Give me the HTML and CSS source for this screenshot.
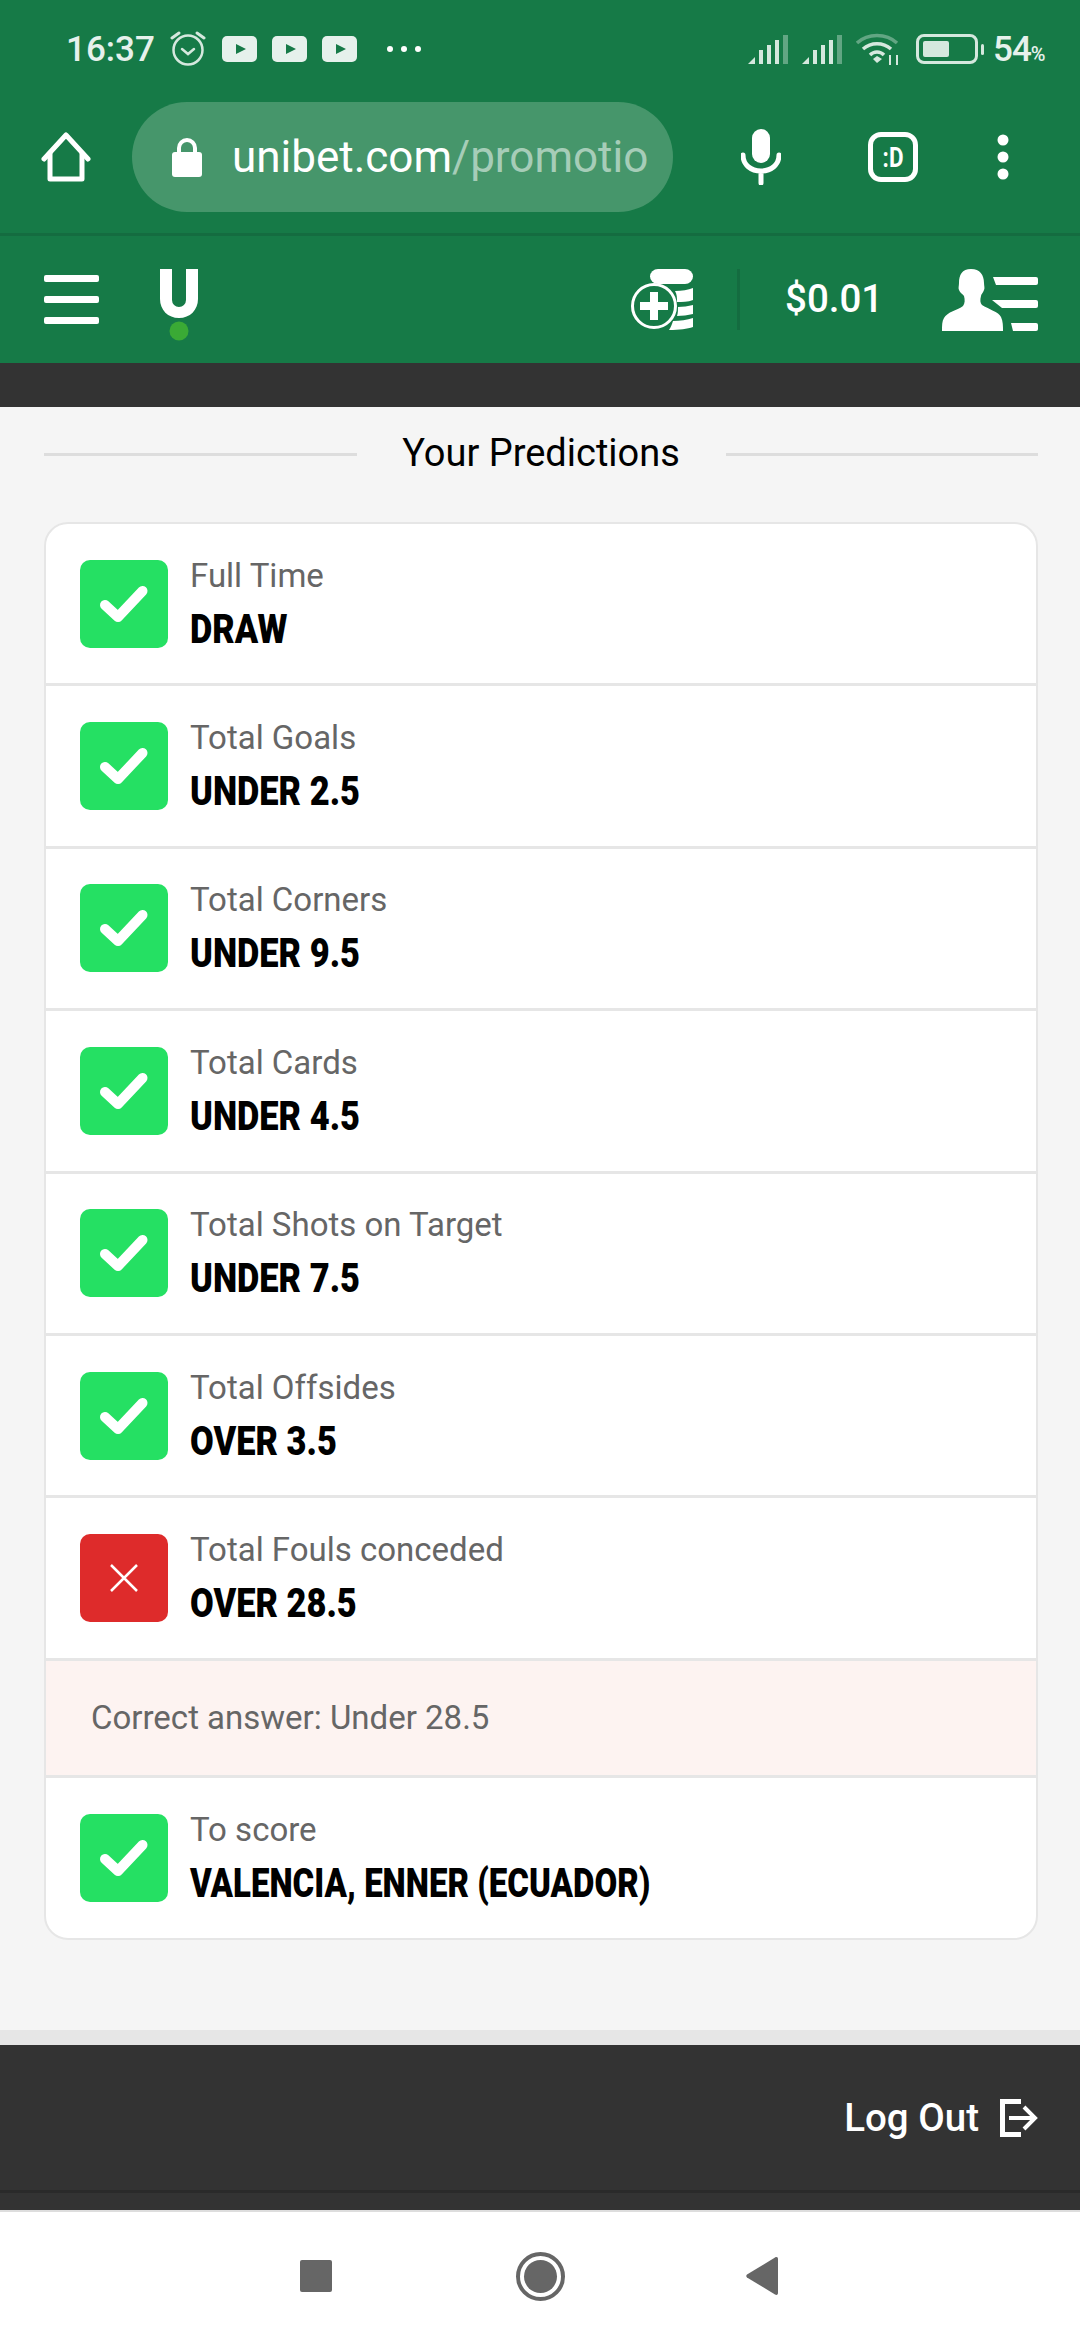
FILE: index.html
```html
<!DOCTYPE html>
<html lang="en">
<head>
<meta charset="UTF-8">
<meta name="viewport" content="width=device-width, initial-scale=1.0">
<title>Your Predictions</title>
<link rel="stylesheet" href="styles.css">
</head>
<body>

<header class="top">
    <div class="status">
        <span class="time">16:37</span>
        <svg class="alarm" width="36" height="36" viewBox="0 0 36 36" fill="none" stroke="#d5e8de" stroke-linecap="round">
            <circle cx="18" cy="19" r="14.5" stroke-width="2.5"/>
            <path d="M12 18l6 5 6-5" stroke-width="2.5"/>
            <path d="M2 7l7-5M34 7l-7-5" stroke-width="3"/>
        </svg>
        <svg class="yt" width="35" height="26" viewBox="0 0 35 26"><rect width="35" height="26" rx="5" fill="#e6f1ec"/><path d="M14 8l10 5-10 5z" fill="#167a47"/></svg>
        <svg class="yt" width="35" height="26" viewBox="0 0 35 26"><rect width="35" height="26" rx="5" fill="#e6f1ec"/><path d="M14 8l10 5-10 5z" fill="#167a47"/></svg>
        <svg class="yt" width="35" height="26" viewBox="0 0 35 26"><rect width="35" height="26" rx="5" fill="#e6f1ec"/><path d="M14 8l10 5-10 5z" fill="#167a47"/></svg>
        <svg class="more" width="34" height="8" viewBox="0 0 34 8" fill="#fff"><circle cx="3" cy="4" r="3"/><circle cx="17" cy="4" r="3"/><circle cx="31" cy="4" r="3"/></svg>

        <div class="status-right">
            <svg class="signal" width="40" height="29" viewBox="0 0 40 29" fill="#d5e8de"><path d="M0 29l7-7v7z"/><rect x="11" y="15" width="4" height="14"/><rect x="19" y="10" width="4" height="19"/><rect x="27" y="5" width="4" height="24"/><rect x="35" width="5" height="29" opacity=".4"/></svg>
            <svg class="signal" width="40" height="29" viewBox="0 0 40 29" fill="#d5e8de"><path d="M0 29l7-7v7z"/><rect x="11" y="15" width="4" height="14"/><rect x="19" y="10" width="4" height="19"/><rect x="27" y="5" width="4" height="24"/><rect x="35" width="5" height="29" opacity=".4"/></svg>
            <svg class="wifi" width="44" height="34" viewBox="0 0 44 34" fill="none" stroke="#d5e8de" stroke-width="3.5">
                <path d="M1 10C12 0 30 0 41 10" opacity=".4"/>
                <path d="M7 16C15 9 27 9 35 16"/>
                <path d="M14 22C18 18 24 18 28 22"/>
                <path d="M17 26l4-3 5 3-5 4z" fill="#d5e8de" stroke="none"/>
                <path d="M34 22v10M41 22v10" stroke-width="2"/>
            </svg>
            <div class="battery"><span class="battery-level"></span></div>
            <span class="battery-nub"></span>
            <span class="percent">54<small>%</small></span>
        </div>
    </div>

    <div class="toolbar">
        <svg class="home" width="50" height="50" viewBox="0 0 50 50" fill="none" stroke="#fff" stroke-width="5" stroke-linejoin="round" stroke-linecap="round">
            <path d="M3 27L25 3l22 24"/>
            <path d="M9 22v25h32V22"/>
        </svg>
        <div class="url-pill">
            <svg class="lock" width="30" height="40" viewBox="0 0 30 40"><path d="M7 17V11a8 8 0 0 1 16 0v6" fill="none" stroke="#fff" stroke-width="4"/><rect y="15" width="30" height="25" rx="3" fill="#fff"/></svg>
            <div class="url"><span>unibet.com</span><span class="url-path">/promotio</span></div>
        </div>
        <svg class="mic" width="40" height="56" viewBox="0 0 40 56" fill="none" stroke="#fff" stroke-linecap="round">
            <rect x="11" y="0" width="18" height="34" rx="9" fill="#fff" stroke="none"/>
            <path d="M2 26c0 10 8 16 18 16s18-6 18-16M20 42v12" stroke-width="5"/>
        </svg>
        <div class="tab-count"><span>:D</span></div>
        <svg class="kebab" width="12" height="46" viewBox="0 0 12 46" fill="#fff"><circle cx="6" cy="6" r="5.5"/><circle cx="6" cy="23" r="5.5"/><circle cx="6" cy="40" r="5.5"/></svg>
    </div>
</header>

<nav class="site-nav">
    <div class="burger"><span></span><span></span><span></span></div>
    <svg class="logo" width="38" height="72" viewBox="0 0 38 72">
        <path d="M0 0h12v31a7 7 0 0 0 14 0V0h12v30c0 11-8 19-19 19S0 41 0 30z" fill="#fff"/>
        <circle cx="19" cy="62" r="9.500" fill="#3aaa35"/>
    </svg>
    <div class="nav-right">
        <svg class="coins" width="62" height="61" viewBox="0 0 62 61">
            <rect x="19" y="0" width="43" height="15" rx="8" fill="#fff"/>
            <path d="M44 22c7 0 13-1 18-3v12c-5 2-11 2-16 2 0-4 0-8-2-11zM47 38c5 0 10-1 15-2v9c-5 1-11 2-16 2 1-3 1-6 1-9zM42 52c7 0 14-1 20-3v9c-6 2-13 3-24 3 2-3 3-6 4-9z" fill="#fff"/>
            <circle cx="23" cy="37" r="21.5" fill="#167a47" stroke="#fff" stroke-width="3"/>
            <path d="M19 23h8v10h10v8H27v10h-8V41H9v-8h10z" fill="#fff"/>
        </svg>
        <span class="nav-sep"></span>
        <span class="balance">$0.01</span>
        <svg class="account" width="96" height="62" viewBox="0 0 96 62" fill="#fff">
            <path d="M29 0c9 0 13 6 13 14 0 3 1 5 0 7-1 3-3 4-3 6-1 4-1 7 1 9 6 4 17 7 19 12 2 4 2 9 2 14H0c0-6 0-10 2-13 3-6 14-8 19-12 2-3 2-6 1-10-1-2-4-3-5-6-1-2 0-4 0-7C17 6 20 0 29 0z"/>
            <path d="M51 8h43a2 2 0 0 1 2 2v4a2 2 0 0 1-2 2H54z"/>
            <path d="M50 31h44a2 2 0 0 1 2 2v4a2 2 0 0 1-2 2H60z"/>
            <path d="M69 54h25a2 2 0 0 1 2 2v4a2 2 0 0 1-2 2H71z"/>
        </svg>
    </div>
</nav>

<div class="dark-strip"></div>

<main class="content">
    <div class="heading">
        <span class="heading-rule"></span>
        <h1>Your Predictions</h1>
        <span class="heading-rule"></span>
    </div>

    <div class="card">
        <div class="row">
            <div class="mark ok"><svg width="88" height="88" viewBox="0 0 88 88"><path d="M25 45l13 12 24.500-26" fill="none" stroke="#fff" stroke-width="10" stroke-linecap="round" stroke-linejoin="round"/></svg></div>
            <div class="row-text"><span class="label">Full Time</span><span class="pick">DRAW</span></div>
        </div>
        <div class="row">
            <div class="mark ok"><svg width="88" height="88" viewBox="0 0 88 88"><path d="M25 45l13 12 24.500-26" fill="none" stroke="#fff" stroke-width="10" stroke-linecap="round" stroke-linejoin="round"/></svg></div>
            <div class="row-text"><span class="label">Total Goals</span><span class="pick">UNDER 2.5</span></div>
        </div>
        <div class="row">
            <div class="mark ok"><svg width="88" height="88" viewBox="0 0 88 88"><path d="M25 45l13 12 24.500-26" fill="none" stroke="#fff" stroke-width="10" stroke-linecap="round" stroke-linejoin="round"/></svg></div>
            <div class="row-text"><span class="label">Total Corners</span><span class="pick">UNDER 9.5</span></div>
        </div>
        <div class="row">
            <div class="mark ok"><svg width="88" height="88" viewBox="0 0 88 88"><path d="M25 45l13 12 24.500-26" fill="none" stroke="#fff" stroke-width="10" stroke-linecap="round" stroke-linejoin="round"/></svg></div>
            <div class="row-text"><span class="label">Total Cards</span><span class="pick">UNDER 4.5</span></div>
        </div>
        <div class="row">
            <div class="mark ok"><svg width="88" height="88" viewBox="0 0 88 88"><path d="M25 45l13 12 24.500-26" fill="none" stroke="#fff" stroke-width="10" stroke-linecap="round" stroke-linejoin="round"/></svg></div>
            <div class="row-text"><span class="label">Total Shots on Target</span><span class="pick">UNDER 7.5</span></div>
        </div>
        <div class="row">
            <div class="mark ok"><svg width="88" height="88" viewBox="0 0 88 88"><path d="M25 45l13 12 24.500-26" fill="none" stroke="#fff" stroke-width="10" stroke-linecap="round" stroke-linejoin="round"/></svg></div>
            <div class="row-text"><span class="label">Total Offsides</span><span class="pick">OVER 3.5</span></div>
        </div>
        <div class="row">
            <div class="mark bad"><svg width="88" height="88" viewBox="0 0 88 88"><path d="M31 31l26 26M57 31L31 57" fill="none" stroke="#fff" stroke-width="2.500"/></svg></div>
            <div class="row-text"><span class="label">Total Fouls conceded</span><span class="pick">OVER 28.5</span></div>
        </div>
        <div class="correct">Correct answer: Under 28.5</div>
        <div class="row">
            <div class="mark ok"><svg width="88" height="88" viewBox="0 0 88 88"><path d="M25 45l13 12 24.500-26" fill="none" stroke="#fff" stroke-width="10" stroke-linecap="round" stroke-linejoin="round"/></svg></div>
            <div class="row-text"><span class="label">To score</span><span class="pick pick-long">VALENCIA, ENNER (ECUADOR)</span></div>
        </div>
    </div>
</main>

<footer class="foot">
    <div class="foot-band"></div>
    <div class="logout">
        <span>Log Out</span>
        <svg width="38" height="38" viewBox="0 0 38 38" fill="none" stroke="#fff">
            <path d="M21 2.500H2.500v33H21" stroke-width="5"/>
            <path d="M9 19h24M24 8l11 11-11 11" stroke-width="4"/>
        </svg>
    </div>
    <div class="foot-end"></div>
</footer>

<div class="android-nav">
    <span class="nav-square"></span>
    <span class="nav-circle"><span></span></span>
    <svg class="nav-back" width="32" height="38" viewBox="0 0 32 38"><path d="M1 17.500L29 .5c2-1 3 0 3 1.500v34c0 1.500-1 2.500-3 1.500L1 20.500c-1-.8-1-2.200 0-3z" fill="#666"/></svg>
</div>

</body>
</html>
```

FILE: styles.css
```css
* {
    box-sizing: border-box;
}

body {
    margin: 0;
    width: 1080px;
    height: 2340px;
    overflow: hidden;
    background: #fff;
    font-family: Roboto, sans-serif;
}

/* browser chrome */
.top {
    background: #167a47;
    height: 236px;
    border-bottom: 3px solid #146c40;
}

.status {
    height: 98px;
    padding: 0 35px 0 66px;
    display: flex;
    align-items: center;
    color: #e6f1ec;
}

.time {
    font-size: 35px;
    font-weight: 500;
    width: 104px;
}

.alarm {
    margin-right: 16px;
}

.yt {
    margin-right: 15px;
}

.more {
    margin-left: 15px;
}

.status-right {
    margin-left: auto;
    display: flex;
    align-items: center;
}

.signal {
    margin-right: 14px;
}

.wifi {
    margin-right: 16px;
    margin-top: 2px;
}

.battery {
    width: 62px;
    height: 30px;
    border: 3px solid #d5e8de;
    border-radius: 8px;
    padding: 4px;
}

.battery-level {
    display: block;
    width: 26px;
    height: 16px;
    background: #d5e8de;
    border-radius: 2px;
}

.battery-nub {
    width: 3px;
    height: 11px;
    margin: 0 9px 0 3px;
    background: #d5e8de;
    border-radius: 2px;
}

.percent {
    font-size: 35px;
    font-weight: 500;
    letter-spacing: -1px;
    width: 52px;
    white-space: nowrap;
}

.percent small {
    font-size: 20px;
    letter-spacing: 0;
}

.toolbar {
    height: 118px;
    padding-left: 41px;
    display: flex;
    align-items: center;
}

.url-pill {
    width: 541px;
    height: 110px;
    margin-left: 41px;
    padding: 0 0 0 40px;
    background: #46966b;
    border-radius: 55px;
    display: flex;
    align-items: center;
}

.lock {
    flex: none;
    margin-right: 30px;
}

.url {
    font-size: 44px;
    color: #fff;
    white-space: nowrap;
}

.url-path {
    color: #a6cdb8;
}

.mic {
    margin-left: 68px;
}

.tab-count {
    width: 50px;
    height: 50px;
    margin-left: 87px;
    border: 5px solid #fff;
    border-radius: 13px;
    display: flex;
    align-items: center;
    justify-content: center;
    color: #fff;
    font-size: 28px;
    font-weight: 700;
}

.tab-count span {
    display: inline-block;
    transform: scaleX(.8);
}

.kebab {
    margin-left: 79px;
}

/* site nav */
.site-nav {
    background: #167a47;
    height: 127px;
    padding: 0 42px 0 44px;
    display: flex;
    align-items: center;
}

.burger {
    width: 55px;
    display: flex;
    flex-direction: column;
    gap: 14px;
}

.burger span {
    height: 7px;
    background: #fff;
    border-radius: 2px;
}

.logo {
    margin-left: 61px;
    margin-top: 10px;
}

.nav-right {
    margin-left: auto;
    display: flex;
    align-items: center;
}

.nav-sep {
    width: 3px;
    height: 61px;
    margin: 0 45px 0 44px;
    background: #146c40;
}

.balance {
    width: 157px;
    margin-top: -2px;
    color: #fff;
    font-size: 38.5px;
    font-weight: 500;
}

.dark-strip {
    height: 44px;
    background: #333;
}

/* predictions */
.content {
    height: 1623px;
    padding: 0 42px 0 44px;
    background: #f5f5f5;
}

.heading {
    height: 115px;
    padding-bottom: 25px;
    display: flex;
    align-items: center;
}

.heading-rule {
    flex: 1;
    height: 3px;
    margin-top: 4px;
    background: #ddd;
}

.heading h1 {
    width: 369px;
    margin: 2px 0 0;
    text-align: center;
    font-size: 38px;
    font-weight: 400;
    color: #000;
}

.card {
    background: #fff;
    border: 2px solid #e6e6e6;
    border-radius: 24px;
    overflow: hidden;
}

.row {
    height: 162.4px;
    padding-left: 34px;
    display: flex;
    align-items: center;
    border-bottom: 3px solid #e6e6e6;
}

.row:last-child {
    height: 160px;
    border-bottom: 0;
}

.mark {
    width: 88px;
    height: 88px;
    flex: none;
    border-radius: 10px;
}

.mark svg {
    display: block;
}

.mark.ok {
    background: #25e063;
}

.mark.bad {
    background: #de2b2b;
}

.row-text {
    margin: 1px 0 0 22px;
    display: flex;
    flex-direction: column;
    align-items: flex-start;
    gap: 7px;
}

.label {
    font-size: 33px;
    font-weight: 400;
    line-height: 42px;
    color: #666;
}

/* the site's condensed display face isn't available, so squeeze Roboto */
.pick {
    font-size: 41px;
    font-weight: 900;
    line-height: 50px;
    color: #000;
    white-space: nowrap;
    transform: scaleX(.84);
    transform-origin: left center;
}

.pick-long {
    transform: scaleX(.805);
}

.correct {
    height: 117px;
    padding-left: 45px;
    display: flex;
    align-items: center;
    background: #fdf3f1;
    border-bottom: 3px solid #e6e6e6;
    font-size: 33px;
    font-weight: 400;
    color: #666;
}

/* footer */
.foot-band {
    height: 15px;
    background: #e6e6e6;
}

.logout {
    height: 148px;
    padding-right: 42px;
    background: #333;
    border-bottom: 3px solid #2a2a2a;
    display: flex;
    align-items: center;
    justify-content: flex-end;
    gap: 21px;
    color: #fff;
    font-size: 38.5px;
    font-weight: 500;
}

.foot-end {
    height: 19px;
    background: #333;
    border-bottom: 2px solid #ddd;
}

/* android buttons */
.android-nav {
    height: 128px;
    padding-left: 300px;
    display: flex;
    align-items: center;
}

.nav-square {
    width: 32px;
    height: 32px;
    background: #666;
    border-radius: 2px;
}

.nav-circle {
    width: 49px;
    height: 49px;
    margin-left: 184px;
    border: 4px solid #666;
    border-radius: 50%;
    display: flex;
    align-items: center;
    justify-content: center;
}

.nav-circle span {
    width: 33px;
    height: 33px;
    background: #666;
    border-radius: 50%;
}

.nav-back {
    margin-left: 181px;
}
```
